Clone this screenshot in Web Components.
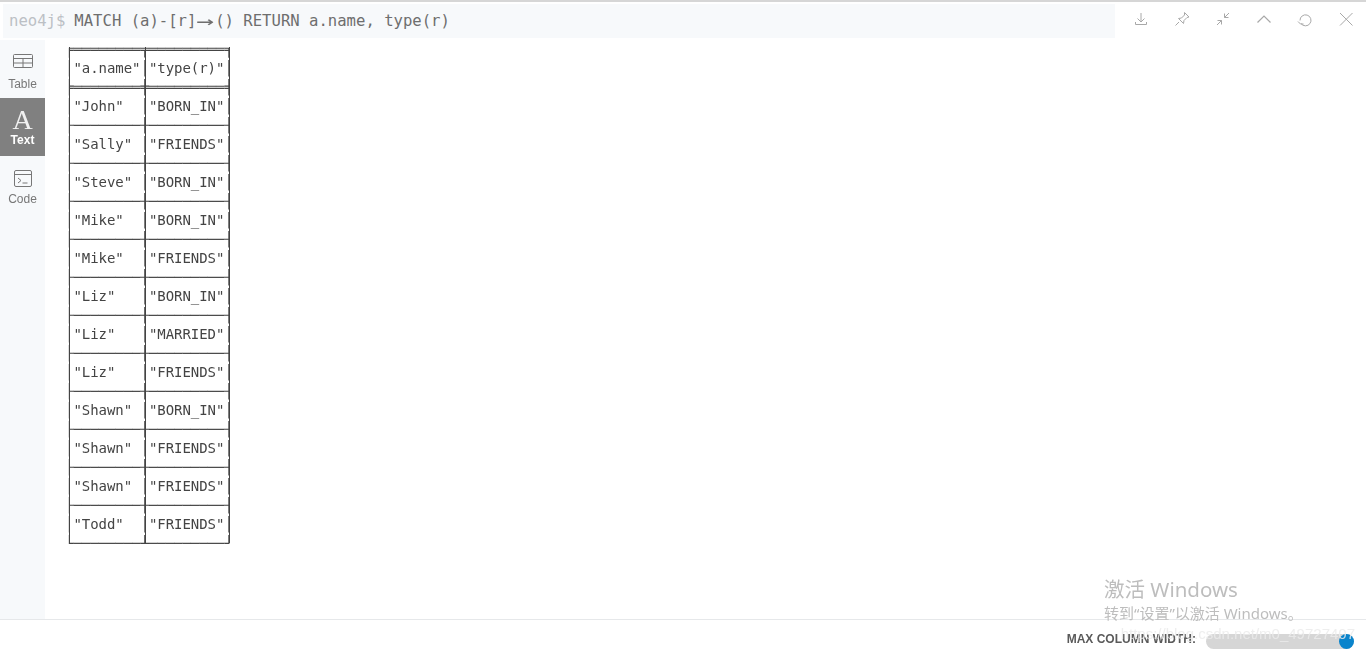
<!DOCTYPE html>
<html>
<head>
<meta charset="utf-8">
<title>neo4j</title>
<style>
  html, body { margin: 0; height: 100%; background: #fff; overflow: hidden; }
  body { font-family: "Liberation Sans", Arial, sans-serif; }
</style>
</head>
<body>
<neo-frame>
  <neo-editor slot="top" prompt="neo4j$">MATCH (a)-[r]<span style="display:inline-block;width:2ch;text-align:center;transform:scale(1.9,1.15)">→</span>() RETURN a.name, type(r)</neo-editor>
  <neo-sidebar slot="side">
    <neo-tab label="Table" style="--pad:10px;--gap:6px">
      <svg width="22" height="16" viewBox="0 0 22 16" fill="none" stroke="#777" stroke-width="1"><rect x="1.5" y="1.5" width="19" height="13" rx="1"/><path d="M1.5 5.5h19M1.500 10h19M11 5.500v9"/></svg>
    </neo-tab>
    <neo-tab label="Text" active style="--pad:8px;--gap:0px"><span class="glyph">A</span></neo-tab>
    <neo-tab label="Code" style="--pad:11px;--gap:4px">
      <svg width="20" height="19" viewBox="0 0 20 19" fill="none" stroke="#777" stroke-width="1"><rect x="1.5" y="1.5" width="17" height="16" rx="1.5"/><path d="M1.5 5.5h17M5 9l3 2.5L5 14M9.500 14h5"/></svg>
    </neo-tab>
  </neo-sidebar>
  <neo-result slot="main">╒════════╤═════════╕
│"a.name"│"type(r)"│
╞════════╪═════════╡
│"John"  │"BORN_IN"│
├────────┼─────────┤
│"Sally" │"FRIENDS"│
├────────┼─────────┤
│"Steve" │"BORN_IN"│
├────────┼─────────┤
│"Mike"  │"BORN_IN"│
├────────┼─────────┤
│"Mike"  │"FRIENDS"│
├────────┼─────────┤
│"Liz"   │"BORN_IN"│
├────────┼─────────┤
│"Liz"   │"MARRIED"│
├────────┼─────────┤
│"Liz"   │"FRIENDS"│
├────────┼─────────┤
│"Shawn" │"BORN_IN"│
├────────┼─────────┤
│"Shawn" │"FRIENDS"│
├────────┼─────────┤
│"Shawn" │"FRIENDS"│
├────────┼─────────┤
│"Todd"  │"FRIENDS"│
└────────┴─────────┘</neo-result>
  <neo-footer slot="bottom"></neo-footer>
  <neo-watermark slot="over"></neo-watermark>
</neo-frame>
<script>
class NeoFrame extends HTMLElement {
  constructor() {
    super()
    this.attachShadow({ mode: 'open' })
    this.shadowRoot.innerHTML = /*html*/ `
      <style>
        :host { display: flex; flex-direction: column; position: relative; width: 1366px; height: 653px; border-top: 2px solid #d6d6d6; box-sizing: border-box; overflow: hidden; will-change: opacity; filter: blur(.3px); }
        .mid { display: flex; height: 579px; margin-top: 2px; }
      </style>
      <slot name="top"></slot>
      <div class="mid"><slot name="side"></slot><slot name="main"></slot></div>
      <slot name="bottom"></slot>
      <slot name="over"></slot>
    `
  }
}
customElements.define('neo-frame', NeoFrame)

class NeoEditor extends HTMLElement {
  constructor() {
    super()
    this.attachShadow({ mode: 'open' })
    this.shadowRoot.innerHTML = /*html*/ `
      <style>
        :host { display: flex; align-items: center; height: 36px; box-sizing: border-box; padding-top: 2px; }
        .bar { display: flex; align-items: center; margin-left: 3px; width: 1112px; height: 34px; background: #f7f9fb; box-sizing: border-box; padding-left: 6px;
          font: 15.6px/34px "DejaVu Sans Mono", monospace; color: #6e6e6e; white-space: pre; }
        .prompt { color: #bcc0c5; margin-right: 9px; }
        .icons { display: flex; margin: 0 0 4px 14px; gap: 17px; align-items: center; }
        svg { display: block; width: 24px; height: 24px; fill: none; stroke: #a8a8a8; stroke-width: 1; }
      </style>
      <div class="bar"><span class="prompt">${this.getAttribute('prompt') ?? ''}</span><slot></slot></div>
      <div class="icons">
        <svg viewBox="0 0 24 24"><path d="M12 6v9M8.500 11.500L12 15l3.500-3.500M6.500 15v2.500h11V15"/></svg>
        <svg viewBox="0 0 24 24"><path d="M14.500 5.500l4.500 4.500-2 .5-3 3-.5 3-5-5 3-.5 3-3zM9 15l-3.500 3.500"/></svg>
        <svg viewBox="0 0 24 24"><path d="M18 6l-4.500 4.500M13.500 6.500v4h4M6 18l4.500-4.500M10.500 17.500v-4h-4"/></svg>
        <svg viewBox="0 0 24 24" style="stroke-width:1.200"><path d="M5.500 15.500L12 9l6.500 6.500"/></svg>
        <svg viewBox="0 0 24 24"><path d="M8 16.500a5.500 5.500 0 1 0-1-3M5 14.500l2.500 2.500h3"/></svg>
        <svg viewBox="0 0 24 24"><path d="M6 6l12.500 12.500M18.500 6L6 18.500"/></svg>
      </div>
    `
  }
}
customElements.define('neo-editor', NeoEditor)

class NeoSidebar extends HTMLElement {
  constructor() {
    super()
    this.attachShadow({ mode: 'open' })
    this.shadowRoot.innerHTML = /*html*/ `
      <style>
        :host { display: flex; flex-direction: column; width: 45px; height: 100%; padding-top: 1px; gap: 1px; background: #f7f9fb; box-sizing: border-box; flex: none; }
      </style>
      <slot></slot>
    `
  }
}
customElements.define('neo-sidebar', NeoSidebar)

class NeoTab extends HTMLElement {
  constructor() {
    super()
    this.attachShadow({ mode: 'open' })
    this.shadowRoot.innerHTML = /*html*/ `
      <style>
        :host { display: flex; flex-direction: column; align-items: center; box-sizing: border-box; padding-top: var(--pad); height: 56px; color: #777; font: 12px/14px "Liberation Sans", Arial, sans-serif; gap: var(--gap); }
        :host([active]) { height: 58px; background: #808080; color: #fff; font-weight: bold; }
        .ic { display: flex; height: 20px; align-items: center; }
        :host([active]) .ic { height: 27px; }
        ::slotted(.glyph) { font: normal 28px/27px "Liberation Serif", serif; color: #f0f0f0; }
      </style>
      <div class="ic"><slot></slot></div>
      <span>${this.getAttribute('label')}</span>
    `
  }
}
customElements.define('neo-tab', NeoTab)

class NeoResult extends HTMLElement {
  constructor() {
    super()
    this.attachShadow({ mode: 'open' })
    this.shadowRoot.innerHTML = /*html*/ `
      <style>
        :host { display: block; flex: 1; box-sizing: border-box; padding: 0 0 0 20px; }
        pre { margin: 0; font: 14px/19px "DejaVu Sans Mono", monospace; letter-spacing: -.04px; color: #444;
          background:
            linear-gradient(#444, #444) 4px 7px / 1px 496px no-repeat,
            linear-gradient(#444, #444) 79.500px 7px / 1px 496px no-repeat,
            linear-gradient(#444, #444) 163.500px 7px / 1px 496px no-repeat; }
      </style>
      <pre><slot></slot></pre>
    `
  }
}
customElements.define('neo-result', NeoResult)

class NeoFooter extends HTMLElement {
  constructor() {
    super()
    this.attachShadow({ mode: 'open' })
    this.shadowRoot.innerHTML = /*html*/ `
      <style>
        :host { display: flex; align-items: center; justify-content: flex-end; height: 34px; box-sizing: border-box; border-top: 1px solid #e6e8ea; padding: 4px 12px 0 0; }
        .lbl { font: bold 12px/14px "Liberation Sans", Arial, sans-serif; color: #5a5a5a; margin-right: 10px; }
        .track { position: relative; width: 148px; height: 15px; margin-top: 6px; border-radius: 8px; background: #d6d6d6; }
        .thumb { position: absolute; right: 0; top: 0; width: 15px; height: 15px; border-radius: 50%; background: #0a84cc; }
      </style>
      <span class="lbl">MAX COLUMN WIDTH:</span>
      <div class="track"><div class="thumb"></div></div>
    `
  }
}
customElements.define('neo-footer', NeoFooter)

class NeoWatermark extends HTMLElement {
  constructor() {
    super()
    this.attachShadow({ mode: 'open' })
    this.shadowRoot.innerHTML = /*html*/ `
      <style>
        :host { display: block; position: absolute; left: 1104px; top: 573px; width: 262px; height: 78px; pointer-events: none; color: #bdbdbd; font-family: "Noto Sans", "Noto Sans CJK SC", sans-serif; white-space: nowrap; }
        .a { font-size: 20.500px; line-height: 28px; }
        .b { font-size: 15px; line-height: 20px; }
        .c { position: absolute; right: 11px; top: 50px; font: 15px/18px "Liberation Sans", Arial, sans-serif; color: rgba(235,235,235,.85); }
      </style>
      <div class="a">激活 Windows</div>
      <div class="b">转到“设置”以激活 Windows。</div>
      <div class="c">https://blog.csdn.net/m0_49727407</div>
    `
  }
}
customElements.define('neo-watermark', NeoWatermark)
</script>
</body>
</html>
